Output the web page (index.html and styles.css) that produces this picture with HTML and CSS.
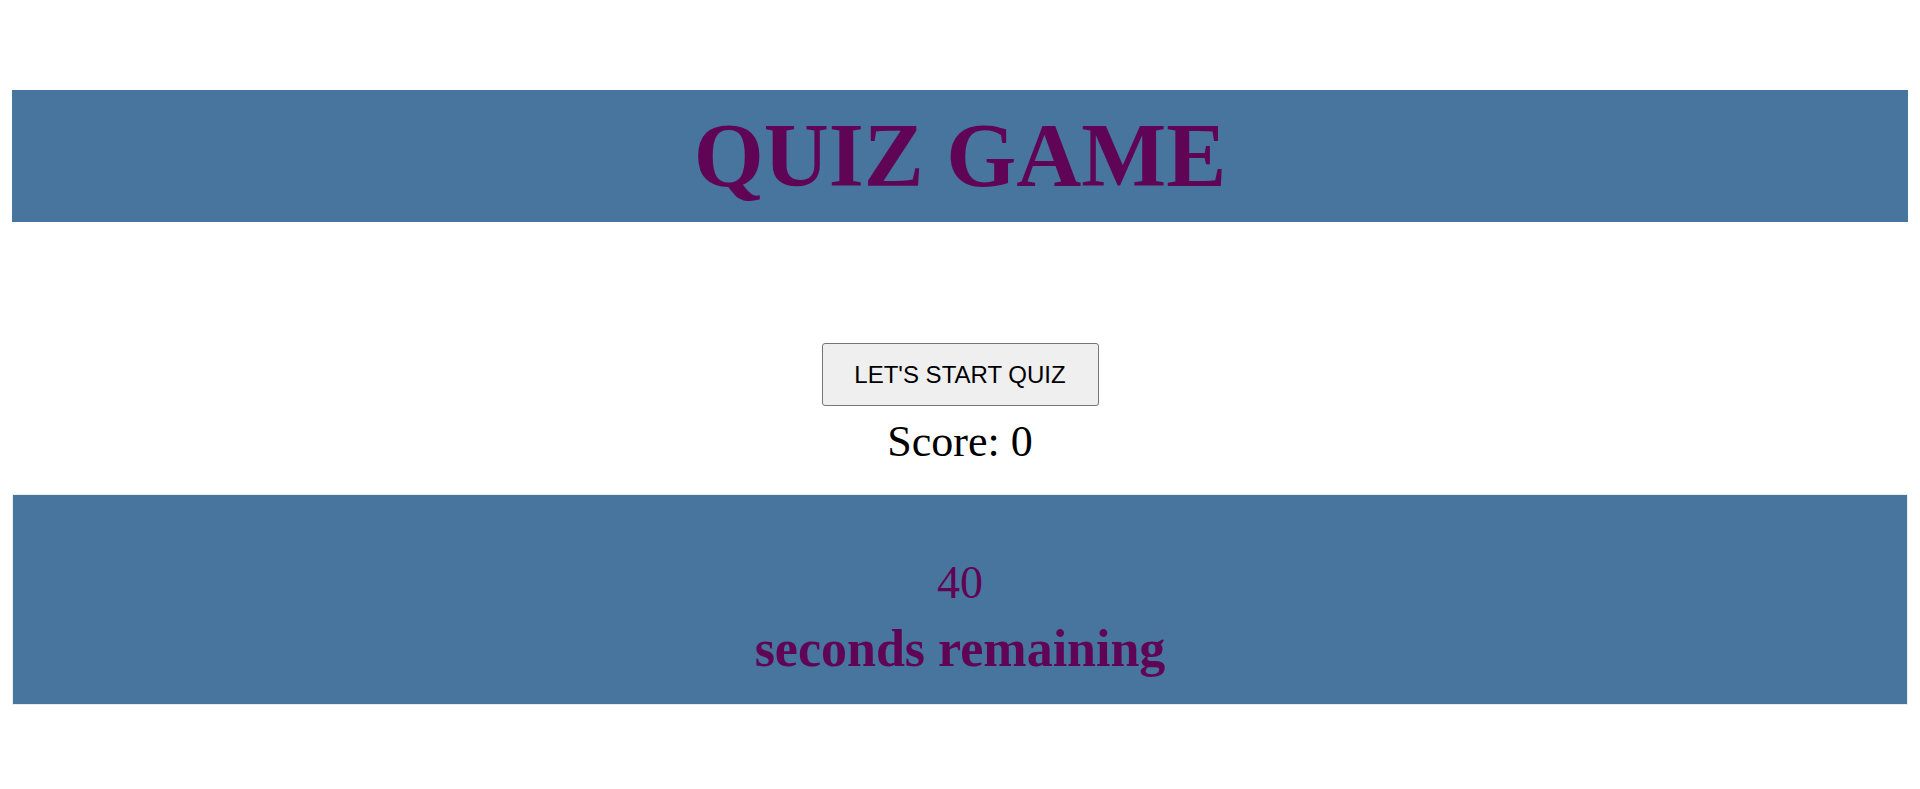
FILE: index.html
```html
<!DOCTYPE html>
<html lang="en">
<head>
<meta charset="utf-8">
<title>Quiz Game</title>
<link rel="stylesheet" href="styles.css">
</head>
<body>
  <header class="banner">
    <h1 class="title">QUIZ GAME</h1>
  </header>
  <main class="middle">
    <button class="start-btn" type="button">LET'S START QUIZ</button>
    <div class="score">Score: 0</div>
  </main>
  <section class="timer">
    <div class="timer-count">40</div>
    <div class="timer-label">seconds remaining</div>
  </section>
</body>
</html>
```

FILE: styles.css
```css
html, body {
  margin: 0;
  padding: 0;
  background: #ffffff;
}

body {
  padding: 90px 12px 0;
  font-family: "Liberation Serif", "Times New Roman", serif;
}

.banner {
  height: 132px;
  background: #48759e;
  display: flex;
  justify-content: center;
}

.title {
  margin: 0;
  font-size: 90px;
  line-height: 132px;
  font-weight: bold;
  color: #600556;
}

.middle {
  display: flex;
  flex-direction: column;
  align-items: center;
  padding-top: 121px;
}

.start-btn {
  height: 63px;
  width: 277px;
  padding: 0;
  font-family: "Liberation Sans", Arial, sans-serif;
  font-size: 24px;
  color: #000;
  background: #efefef;
  border: 1px solid #767676;
  border-radius: 3px;
}

.score {
  margin-top: 11px;
  margin-bottom: 27px;
  font-size: 44px;
  line-height: 50px;
  color: #000;
}

.timer {
  background: #48759e;
  border: 1px solid #e9edf1;
  height: 209px;
  box-sizing: content-box;
  display: flex;
  flex-direction: column;
  align-items: center;
  color: #600556;
}

.timer-count {
  margin-top: 65px;
  font-size: 46px;
  line-height: 46px;
}

.timer-label {
  margin-top: 16px;
  font-size: 52px;
  line-height: 53px;
  font-weight: bold;
}
```
